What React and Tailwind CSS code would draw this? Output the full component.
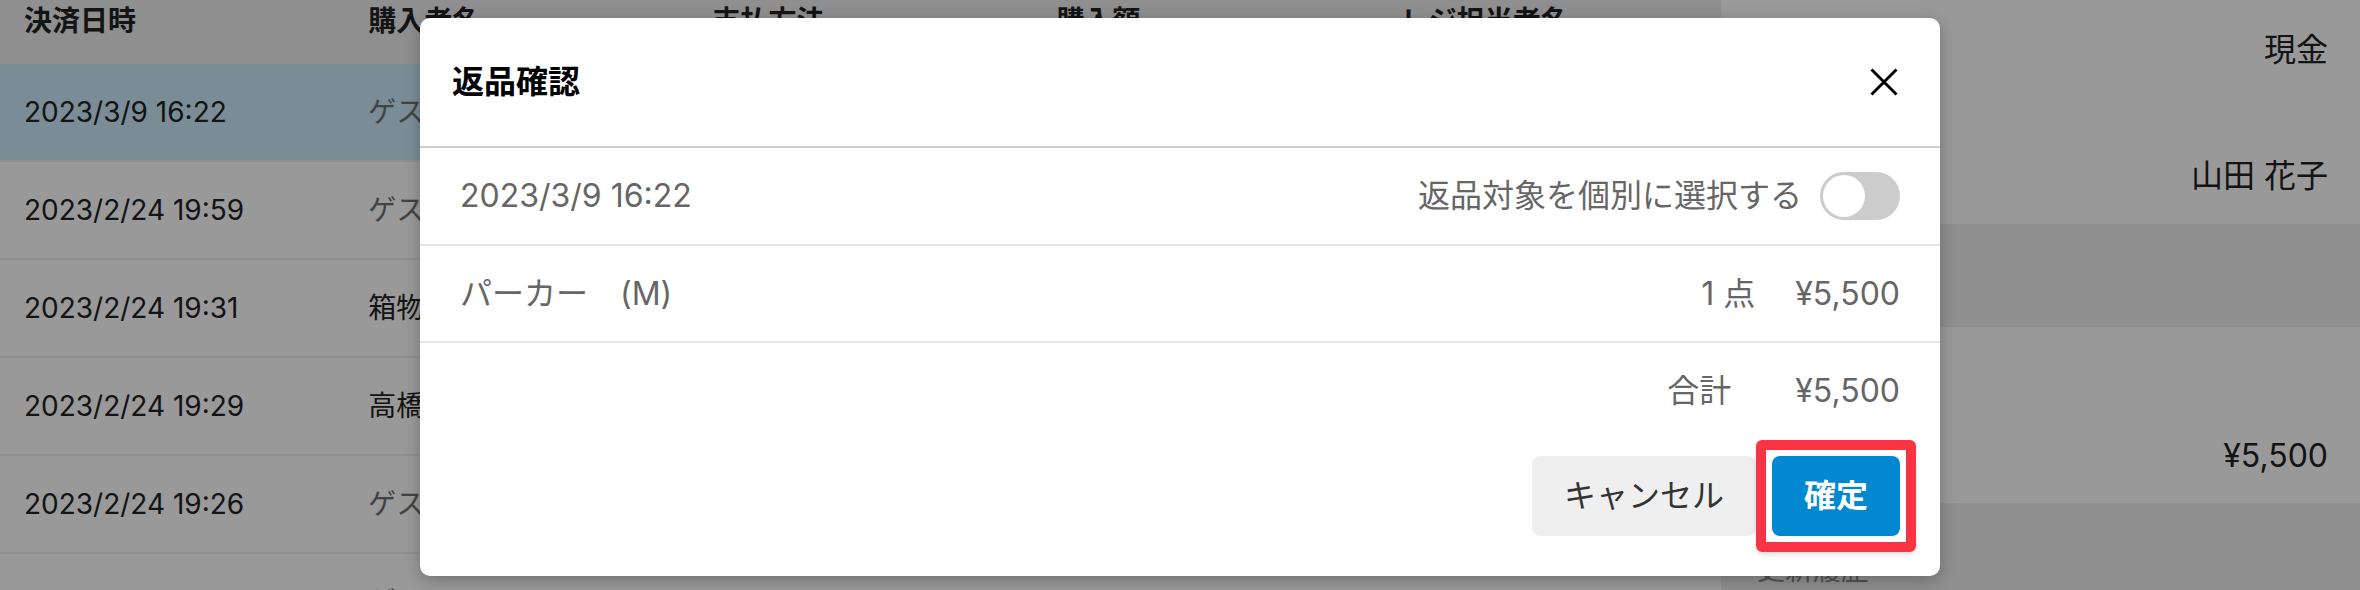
import { useState } from 'react'

const rows = [
  { date: '2023/3/9 16:22', name: 'ゲスト', guest: true, method: '現金', amount: '¥5,500', staff: '山田 花子' },
  { date: '2023/2/24 19:59', name: 'ゲスト', guest: true, method: '現金', amount: '¥3,300', staff: '山田 花子' },
  { date: '2023/2/24 19:31', name: '箱物 太郎', method: 'クレジット', amount: '¥12,100', staff: '山田 花子' },
  { date: '2023/2/24 19:29', name: '高橋 一郎', method: '現金', amount: '¥2,200', staff: '佐藤 健' },
  { date: '2023/2/24 19:26', name: 'ゲスト', guest: true, method: '現金', amount: '¥5,500', staff: '佐藤 健' },
  { date: '2023/2/24 19:20', name: 'ゲスト', guest: true, method: 'PayPay', amount: '¥1,100', staff: '-' },
]

function Toggle({ on, onChange }) {
  return (
    <button
      onClick={() => onChange(!on)}
      className={`w-20 h-12 rounded-full p-[3px] flex ${on ? 'bg-[#0288d1] justify-end' : 'bg-[#cccccc] justify-start'}`}
    >
      <span className="size-[42px] rounded-full bg-white" />
    </button>
  )
}

export default function App() {
  const [selectEach, setSelectEach] = useState(false)

  return (
    <div className="relative w-full h-[590px] overflow-hidden font-['Inter','Noto_Sans_CJK_JP',sans-serif] text-[#222]">
      <div className="flex h-full">
        {/* Sales list */}
        <div className="w-[1721px] bg-white">
          <div className="grid grid-cols-5 h-16 bg-[#eeeeee] text-[28px] font-bold leading-8 pt-[5px]">
            <div className="pl-6">決済日時</div>
            <div className="pl-6">購入者名</div>
            <div className="pl-6">支払方法</div>
            <div className="pl-6">購入額</div>
            <div className="pl-6">レジ担当者名</div>
          </div>
          {rows.map((r, i) => (
            <div
              key={r.date}
              className={`grid grid-cols-5 h-[98px] items-center border-b-2 border-[#eeeeee] text-[28px] ${i === 0 ? 'bg-[#cbebfa]' : ''}`}
            >
              <div className="pl-6">{r.date}</div>
              <div className={`pl-6 ${r.guest ? 'text-[#707070]' : ''}`}>{r.name}</div>
              <div className="pl-6">{r.method}</div>
              <div className="pl-6">{r.amount}</div>
              <div className="pl-6">{r.staff}</div>
            </div>
          ))}
        </div>

        {/* Detail panel */}
        <div className="flex-1 flex flex-col bg-white text-[32px] leading-[48px]">
          <div className="h-[100px] flex items-center justify-between pl-9 pr-8">
            <span>支払方法</span>
            <span>現金</span>
          </div>
          <div className="h-[125px] flex items-start justify-between pl-9 pr-8 pt-[53px]">
            <span>レジ担当者</span>
            <span>山田 花子</span>
          </div>
          <div className="h-[104px] bg-[#eeeeee]" />
          <div className="h-[176px] flex items-start justify-between pl-9 pr-8 pt-[105px]">
            <span>合計</span>
            <span>¥5,500</span>
          </div>
          <div className="flex-1 bg-[#eeeeee] pl-9 pt-[47px] text-[28px] leading-[40px] text-[#888]">更新履歴</div>
        </div>
      </div>

      {/* Return confirmation dialog */}
      <div className="absolute inset-0 bg-black/40 flex justify-center items-start pt-[18px]">
        <div className="w-[1520px] bg-white rounded-[10px] shadow-[0_4px_16px_rgba(0,0,0,0.25)] text-[32px] text-[#666]">
          <div className="h-[130px] flex items-center justify-between pl-8 pr-[42px] border-b-2 border-[#cccccc]">
            <h2 className="font-bold text-black">返品確認</h2>
            <button>
              <svg width="28" height="28" viewBox="0 0 28 28">
                <path d="M1.5 1.5 26.5 26.5 M26.5 1.5 1.5 26.5" stroke="#000" strokeWidth="3" />
              </svg>
            </button>
          </div>

          <div className="h-[98px] flex items-center justify-between px-10 border-b-2 border-[#e6e6eb]">
            <span>2023/3/9 16:22</span>
            <div className="flex items-center gap-[18px]">
              <span>返品対象を個別に選択する</span>
              <Toggle on={selectEach} onChange={setSelectEach} />
            </div>
          </div>

          <div className="h-[97px] flex items-center justify-between px-10 border-b-2 border-[#e6e6eb]">
            <span>パーカー　(M)</span>
            <div className="flex items-center gap-10">
              <span>1 点</span>
              <span>¥5,500</span>
            </div>
          </div>

          <div className="h-[96px] flex items-center justify-end gap-16 px-10">
            <span>合計</span>
            <span>¥5,500</span>
          </div>

          <div className="flex justify-end gap-4 px-10 pt-[17px] pb-10">
            <button className="h-20 px-8 rounded-lg bg-[#efefef] text-[#333]">キャンセル</button>
            <div className="relative">
              <button className="h-20 w-32 rounded-lg bg-[#0288d1] text-white font-bold">確定</button>
              <div className="absolute -inset-4 border-[10px] border-[#f93444] rounded-md shadow-md pointer-events-none" />
            </div>
          </div>
        </div>
      </div>
    </div>
  )
}
